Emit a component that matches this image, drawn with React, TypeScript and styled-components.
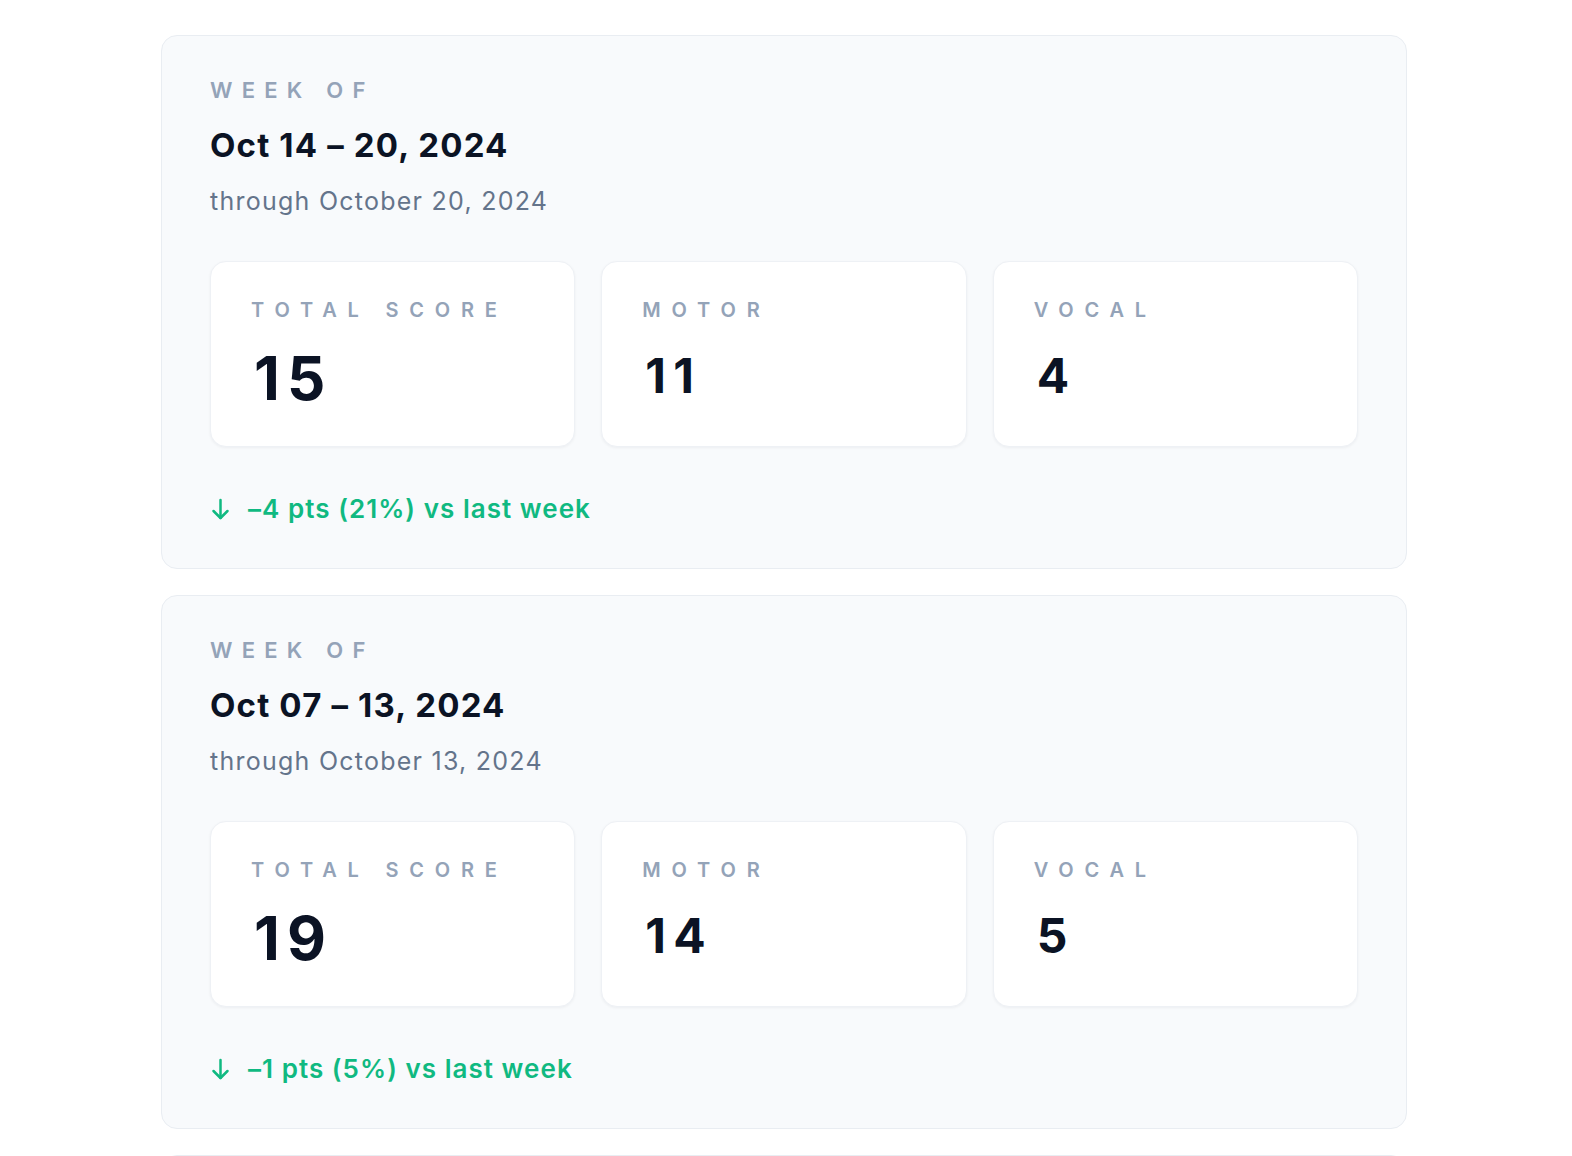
import React from "react";
import styled, { createGlobalStyle } from "styled-components";

const GlobalStyle = createGlobalStyle`
  * { box-sizing: border-box; }
  html, body { margin: 0; padding: 0; background: #ffffff; }
  body {
    font-family: Inter, "Noto Sans", "Liberation Sans", sans-serif;
    -webkit-font-smoothing: antialiased;
  }
`;

const Page = styled.main`
  height: 1156px;
  overflow: hidden;
  padding: 35px 0 0 161px;
`;

const List = styled.div`
  width: 1246px;
  display: flex;
  flex-direction: column;
  gap: 26px;
`;

const WeekCard = styled.section`
  background: #f8fafc;
  border: 1px solid #e9edf2;
  border-radius: 16px;
  padding: 40px 48px 43px;
  display: flex;
  flex-direction: column;
`;

const Eyebrow = styled.div`
  font-size: 22px;
  line-height: 28px;
  font-weight: 600;
  letter-spacing: 0.42em;
  color: #94a3b8;
  text-transform: uppercase;
`;

const Title = styled.h2`
  margin: 20px 0 0;
  font-size: 33px;
  line-height: 42px;
  font-weight: 700;
  color: #0b1324;
  letter-spacing: 0.035em;
`;

const Sub = styled.div`
  margin-top: 19px;
  font-size: 25px;
  line-height: 32px;
  font-weight: 400;
  color: #64748b;
  letter-spacing: 0.05em;
`;

const Grid = styled.div`
  margin-top: 44px;
  display: grid;
  grid-template-columns: repeat(3, 1fr);
  gap: 26px;
`;

const Metric = styled.div`
  background: #ffffff;
  border: 1px solid #eef1f5;
  border-radius: 16px;
  box-shadow: 0 1px 3px rgba(15, 23, 42, 0.05);
  padding: 36px 40px;
  height: 186px;
  display: flex;
  flex-direction: column;
`;

const MetricLabel = styled.div`
  font-size: 20px;
  line-height: 24px;
  font-weight: 600;
  letter-spacing: 0.54em;
  color: #94a3b8;
  text-transform: uppercase;
`;

const MetricValue = styled.div<{ $big?: boolean }>`
  margin-top: ${(p) => (p.$big ? "26px" : "24px")};
  font-size: ${(p) => (p.$big ? "60px" : "48px")};
  line-height: 60px;
  font-weight: 700;
  color: #0b1324;
  padding-left: 3px;
  letter-spacing: ${(p) => (p.$big ? "0.12em" : "0.15em")};
`;

const Delta = styled.div`
  margin-top: 46px;
  display: flex;
  align-items: center;
  font-size: 26px;
  line-height: 32px;
  font-weight: 600;
  color: #10b981;
  letter-spacing: 0.04em;
`;

const ArrowIcon = styled.svg`
  width: 19px;
  height: 22px;
  margin: 0 18px 0 1px;
  flex: none;
`;

type Week = {
  range: string;
  through: string;
  total: number;
  motor: number;
  vocal: number;
  delta: string;
};

const weeks: Week[] = [
  {
    range: "Oct 14 – 20, 2024",
    through: "through October 20, 2024",
    total: 15,
    motor: 11,
    vocal: 4,
    delta: "–4 pts (21%) vs last week",
  },
  {
    range: "Oct 07 – 13, 2024",
    through: "through October 13, 2024",
    total: 19,
    motor: 14,
    vocal: 5,
    delta: "–1 pts (5%) vs last week",
  },
  {
    range: "Sep 30 – Oct 06, 2024",
    through: "through October 06, 2024",
    total: 20,
    motor: 15,
    vocal: 5,
    delta: "–2 pts (9%) vs last week",
  },
];

const DownArrow = () => (
  <ArrowIcon viewBox="0 0 19 22" fill="none" stroke="currentColor" strokeWidth={2.5} strokeLinecap="round" strokeLinejoin="round">
    <path d="M9.5 2v18" />
    <path d="M2.5 13 9.5 20l7-7" />
  </ArrowIcon>
);

export default function App() {
  return (
    <>
      <GlobalStyle />
      <Page>
        <List>
          {weeks.map((w) => (
            <WeekCard key={w.range}>
              <Eyebrow>Week of</Eyebrow>
              <Title>{w.range}</Title>
              <Sub>{w.through}</Sub>
              <Grid>
                <Metric>
                  <MetricLabel>Total score</MetricLabel>
                  <MetricValue $big>{w.total}</MetricValue>
                </Metric>
                <Metric>
                  <MetricLabel>Motor</MetricLabel>
                  <MetricValue>{w.motor}</MetricValue>
                </Metric>
                <Metric>
                  <MetricLabel>Vocal</MetricLabel>
                  <MetricValue>{w.vocal}</MetricValue>
                </Metric>
              </Grid>
              <Delta>
                <DownArrow />
                {w.delta}
              </Delta>
            </WeekCard>
          ))}
        </List>
      </Page>
    </>
  );
}
